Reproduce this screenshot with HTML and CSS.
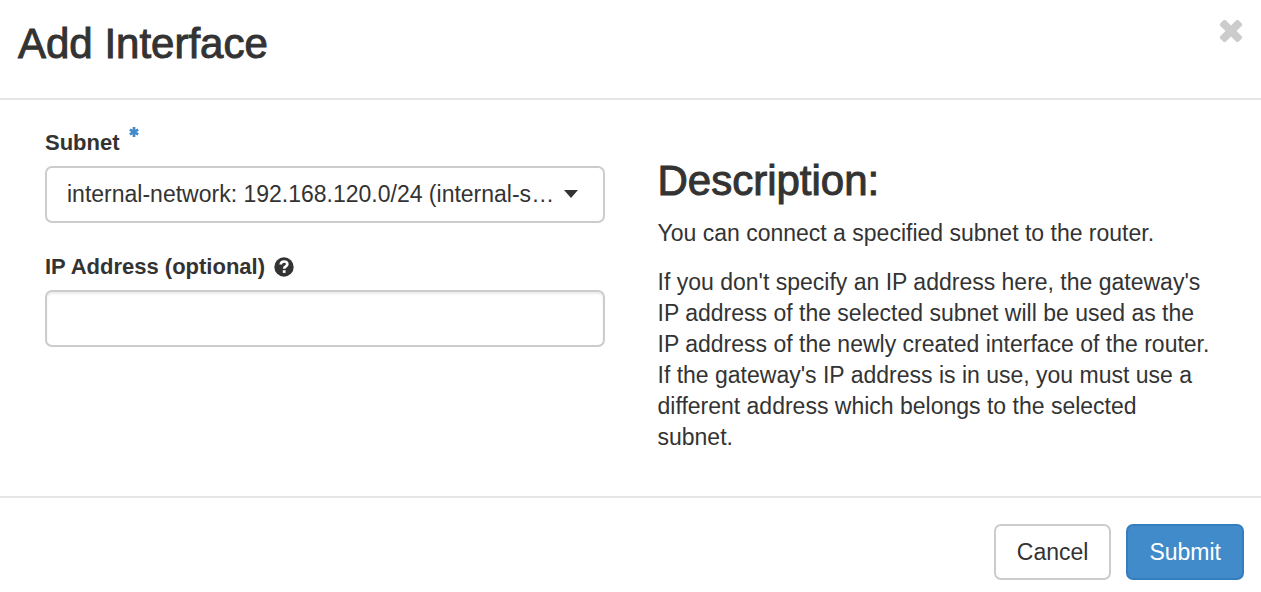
FILE: index.html
```
<!DOCTYPE html>
<html lang="en">
<head>
<meta charset="utf-8">
<meta name="viewport" content="width=device-width, initial-scale=1">
<title>Add Interface</title>
<link rel="stylesheet" href="styles.css">
</head>
<body>
<form class="modal" role="dialog" aria-labelledby="modal-title">
  <header class="modal-header">
    <h1 class="heading" id="modal-title">Add Interface</h1>
    <button class="close" type="button" aria-label="Close">
      <svg width="24" height="24" viewBox="0 0 24 24" aria-hidden="true"><g fill="#ccc" transform="rotate(45 12 11)"><rect x="-1" y="7.100" width="26" height="7.800" rx="2"/><rect x="8.100" y="-2" width="7.800" height="26" rx="2"/></g></svg>
    </button>
  </header>
  <div class="modal-body">
    <div class="fields">
      <div class="field">
        <label class="label" for="subnet">Subnet
          <svg class="required" width="10" height="12" viewBox="0 0 10 12" role="img" aria-label="required"><path d="M5 0V10M0.800 2.600L9.200 7.400M9.200 2.600L0.800 7.400" stroke="#428bca" stroke-width="2.700"/></svg>
        </label>
        <div class="select-wrap">
          <select class="control select" id="subnet">
            <option>internal-network: 192.168.120.0/24 (internal-subnet)</option>
          </select>
          <svg class="caret" width="14" height="8" viewBox="0 0 14 8" aria-hidden="true"><path d="M0 0H14L7 8Z" fill="#333"/></svg>
        </div>
      </div>
      <div class="field">
        <label class="label" for="ip">IP Address (optional)
          <svg class="help" width="20" height="20" viewBox="0 0 20 20" aria-hidden="true"><circle cx="10" cy="10" r="9.700" fill="#333"/><path d="M6.700 7.500C6.900 5.200 8.300 4.500 10.100 4.500C12 4.500 13.300 5.600 13.300 7.200C13.300 9.400 10.200 9.400 10.200 11.700" fill="none" stroke="#fff" stroke-width="2.700"/><path d="M8.800 13.200H11.600V15.900H8.800Z" fill="#fff"/></svg>
        </label>
        <input class="control input" id="ip" type="text">
      </div>
    </div>
    <section class="description">
      <h2 class="heading">Description:</h2>
      <p class="text">You can connect a specified subnet to the router.</p>
      <p class="text">If you don't specify an IP address here, the gateway's IP address of the selected subnet will be used as the IP address of the newly created interface of the router. If the gateway's IP address is in use, you must use a different address which belongs to the selected subnet.</p>
    </section>
  </div>
  <footer class="modal-footer">
    <button class="button" type="button">Cancel</button>
    <button class="button primary" type="submit">Submit</button>
  </footer>
</form>
</body>
</html>
```
FILE: styles.css
```
* {
  box-sizing: border-box;
}

body {
  margin: 0;
  background: #fff;
  color: #333;
  font-family: "Helvetica Neue", "Liberation Sans", Arial, sans-serif;
  font-size: 23px;
  line-height: 31px;
}

.modal-header {
  display: flex;
  justify-content: space-between;
  align-items: flex-start;
  padding: 20px 18px 30px;
  border-bottom: 2px solid #e5e5e5;
}

.heading {
  margin: 0;
  font-size: 42px;
  font-weight: 500;
  line-height: 48px;
  -webkit-text-stroke: 1px #333;
}

.close {
  display: flex;
  padding: 0;
  border: 0;
  background: none;
  cursor: pointer;
}

.modal-body {
  display: grid;
  grid-template-columns: 1fr 1fr;
  gap: 53px;
  padding: 27px 44px 43px 45px;
}

.field {
  margin-bottom: 28px;
}

.label {
  display: flex;
  align-items: center;
  gap: 9px;
  margin-bottom: 8px;
  font-size: 22px;
  font-weight: 700;
}

.required {
  align-self: flex-start;
}

.select-wrap {
  position: relative;
}

.control {
  display: block;
  width: 100%;
  height: 57px;
  margin: 0;
  border: 2px solid #ccc;
  border-radius: 7px;
  background: #fff;
  color: #333;
  font: inherit;
}

.select {
  appearance: none;
  padding: 0 44px 0 20px;
  text-overflow: ellipsis;
}

.caret {
  position: absolute;
  top: 24px;
  right: 27px;
  pointer-events: none;
}

.input {
  padding: 0 20px;
  box-shadow: inset 0 2px 2px rgba(0, 0, 0, 0.08);
}

.description {
  padding-top: 30px;
}

.text {
  margin: 13px 0 18px;
}

.text:last-child {
  margin-bottom: 0;
}

.modal-footer {
  display: flex;
  justify-content: flex-end;
  gap: 15px;
  padding: 26px 17px 12px;
  border-top: 2px solid #e5e5e5;
}

.button {
  height: 56px;
  padding: 0 21px;
  border: 2px solid #ccc;
  border-radius: 7px;
  background: #fff;
  color: #333;
  font: inherit;
  cursor: pointer;
}

.primary {
  border-color: #357ebd;
  background: #428bca;
  color: #fff;
}
```
